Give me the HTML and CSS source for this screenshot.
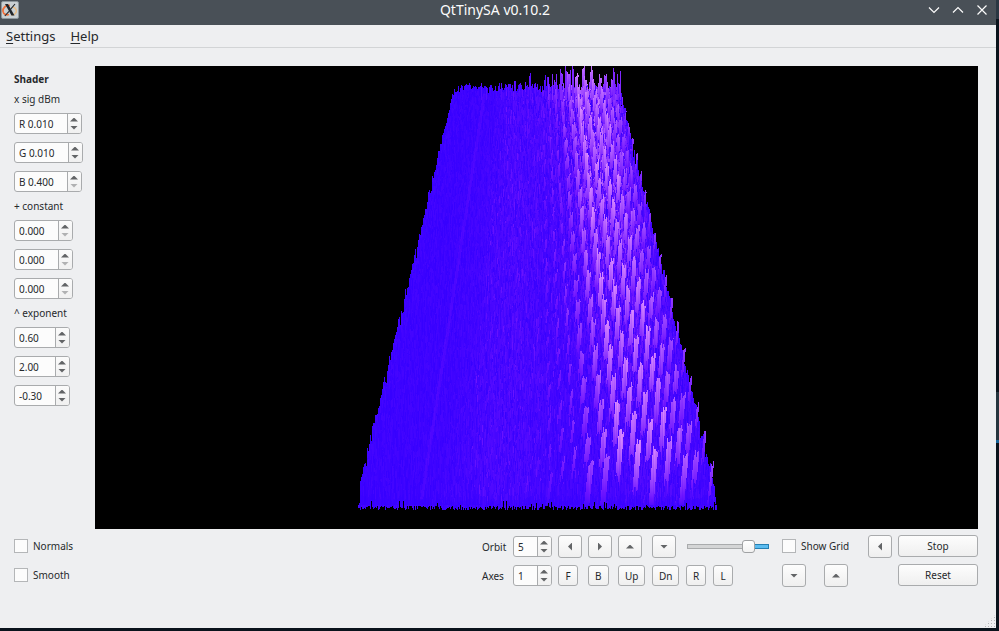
FILE: index.html
```html
<!DOCTYPE html>
<html lang="en">
<head>
<meta charset="utf-8">
<title>QtTinySA v0.10.2</title>
<link rel="stylesheet" href="styles.css">
</head>
<body>
<div class="window">
  <header class="titlebar">
    <svg class="app-icon" viewBox="0 0 18 18" aria-hidden="true">
      <rect x=".5" y=".5" width="17" height="17" rx="1.5" fill="#c9d0d3" stroke="#8d979c"/>
      <path d="M9 4.500C4.500 4 1.500 7 2 10.500c.4 2.500 3 4 6 3" fill="none" stroke="#f0703a" stroke-width="1.700"/>
      <path d="M12 6c3 1 4 3.500 3 5.500-.8 1.800-3 2.500-5 2.200" fill="none" stroke="#e9bd84" stroke-width="1.400"/>
      <path d="M4 3h3l6.500 11.500h-3z" fill="#20262b"/>
      <path d="M14 3 9.700 8.200M8 10.400 3.800 15" stroke="#20262b" stroke-width="1.100"/>
    </svg>
    <h1 class="title">QtTinySA v0.10.2</h1>
    <div class="window-buttons">
      <button type="button" aria-label="Minimize"><svg viewBox="0 0 12 12"><path d="M1 3.500 6 8.500 11 3.500"/></svg></button>
      <button type="button" aria-label="Maximize"><svg viewBox="0 0 12 12"><path d="M1 8.500 6 3.500 11 8.500"/></svg></button>
      <button type="button" aria-label="Close"><svg viewBox="0 0 12 12"><path d="M1.500 1.500 10.500 10.500M10.500 1.500 1.500 10.500"/></svg></button>
    </div>
  </header>
  <nav class="menubar">
    <a href="#settings"><u>S</u>ettings</a>
    <a href="#help"><u>H</u>elp</a>
  </nav>
  <main class="content">
    <div class="upper">
      <form class="shader">
        <h2 class="caption strong">Shader</h2>
        <p class="caption">x sig dBm</p>
        <div class="spin wide"><input type="text" value="R 0.010" aria-label="Signal red"><span class="steps"><button type="button" class="up" aria-label="Increase"></button><button type="button" class="down" aria-label="Decrease"></button></span></div>
        <div class="spin wider"><input type="text" value="G 0.010" aria-label="Signal green"><span class="steps"><button type="button" class="up" aria-label="Increase"></button><button type="button" class="down" aria-label="Decrease"></button></span></div>
        <div class="spin wide"><input type="text" value="B 0.400" aria-label="Signal blue"><span class="steps"><button type="button" class="up" aria-label="Increase"></button><button type="button" class="down" aria-label="Decrease" disabled></button></span></div>
        <p class="caption">+ constant</p>
        <div class="spin medium"><input type="text" value="0.000" aria-label="Constant red"><span class="steps"><button type="button" class="up" aria-label="Increase"></button><button type="button" class="down" aria-label="Decrease" disabled></button></span></div>
        <div class="spin medium"><input type="text" value="0.000" aria-label="Constant green"><span class="steps"><button type="button" class="up" aria-label="Increase"></button><button type="button" class="down" aria-label="Decrease" disabled></button></span></div>
        <div class="spin medium"><input type="text" value="0.000" aria-label="Constant blue"><span class="steps"><button type="button" class="up" aria-label="Increase"></button><button type="button" class="down" aria-label="Decrease" disabled></button></span></div>
        <p class="caption">^ exponent</p>
        <div class="spin narrow"><input type="text" value="0.60" aria-label="Exponent red"><span class="steps"><button type="button" class="up" aria-label="Increase"></button><button type="button" class="down" aria-label="Decrease"></button></span></div>
        <div class="spin narrow"><input type="text" value="2.00" aria-label="Exponent green"><span class="steps"><button type="button" class="up" aria-label="Increase"></button><button type="button" class="down" aria-label="Decrease"></button></span></div>
        <div class="spin narrow"><input type="text" value="-0.30" aria-label="Exponent blue"><span class="steps"><button type="button" class="up" aria-label="Increase"></button><button type="button" class="down" aria-label="Decrease"></button></span></div>
      </form>
      <div class="view"><canvas id="surface" width="883" height="463"></canvas></div>
    </div>
    <div class="controls">
      <label class="check"><input type="checkbox">Normals</label>
      <label for="orbit">Orbit</label>
      <div class="spin small"><input type="text" id="orbit" value="5"><span class="steps"><button type="button" class="up" aria-label="Increase"></button><button type="button" class="down" aria-label="Decrease"></button></span></div>
      <button type="button" class="btn arrow left" aria-label="Orbit left"></button>
      <button type="button" class="btn arrow right" aria-label="Orbit right"></button>
      <button type="button" class="btn arrow up" aria-label="Orbit up"></button>
      <button type="button" class="btn arrow down" aria-label="Orbit down"></button>
      <input class="slider" type="range" min="0" max="100" value="80" aria-label="Zoom">
      <label class="check"><input type="checkbox">Show Grid</label>
      <button type="button" class="btn arrow left" aria-label="Grid left"></button>
      <button type="button" class="btn action">Stop</button>

      <label class="check"><input type="checkbox">Smooth</label>
      <label for="axes">Axes</label>
      <div class="spin small"><input type="text" id="axes" value="1"><span class="steps"><button type="button" class="up" aria-label="Increase"></button><button type="button" class="down" aria-label="Decrease"></button></span></div>
      <button type="button" class="btn">F</button>
      <button type="button" class="btn">B</button>
      <button type="button" class="btn">Up</button>
      <button type="button" class="btn">Dn</button>
      <div class="pair"><button type="button" class="btn">R</button><button type="button" class="btn">L</button></div>
      <div class="pair grid-move"><button type="button" class="btn arrow down" aria-label="Grid down"></button><button type="button" class="btn arrow up" aria-label="Grid up"></button></div>
      <button type="button" class="btn action reset">Reset</button>
    </div>
  </main>
  <div class="grip"></div>
</div>
<script src="surface.js"></script>
</body>
</html>
```
FILE: styles.css
```css
* { box-sizing: border-box; }

body {
  margin: 0;
  min-height: 100vh;
  display: flex;
  padding: 0 3px 3px 0;
  background: linear-gradient(#2b3742 19px, #0a131c 19px, #0a131c 392px, #25343e 392px, #25343e 440px, #17649a 440px, #17649a 443px, #0a131c 443px);
  color: #26292c;
  font: 10px/12px "Noto Sans", sans-serif;
}

button, input { font: inherit; color: inherit; margin: 0; }

.window {
  position: relative;
  flex: 1;
  min-width: 0;
  background: #eeeff1;
}

.titlebar {
  display: grid;
  grid-template-columns: 62px 1fr 68px;
  align-items: center;
  height: 25px;
  padding-bottom: 5px;
  background: #495057;
  color: #fcfcfc;
}

.app-icon { width: 18px; height: 18px; margin-left: 1px; }

.title {
  margin: 0;
  text-align: center;
  font-size: 14px;
  line-height: 20px;
  font-weight: 400;
}

.window-buttons { display: flex; gap: 12px; }
.window-buttons button {
  width: 12px;
  height: 12px;
  padding: 0;
  border: 0;
  background: none;
}
.window-buttons svg {
  display: block;
  fill: none;
  stroke: #fcfcfc;
  stroke-width: 1.2;
}

.menubar {
  display: flex;
  gap: 15px;
  height: 23px;
  padding-left: 6px;
  border-bottom: 1px solid #d2d4d6;
  font-size: 13px;
  line-height: 23px;
}
.menubar a { color: inherit; text-decoration: none; }
.menubar u { text-underline-offset: 2px; }

.content { padding: 18px 18px 38px 14px; }
.upper { display: flex; }

.shader {
  flex: 0 0 81px;
  display: flex;
  flex-direction: column;
  align-items: flex-start;
  gap: 8px;
  padding-top: 7px;
}
.caption { margin: 0; font-size: inherit; font-weight: 400; white-space: nowrap; }
.strong { font-weight: 700; }

.view { flex: 1; min-width: 0; background: #000; }
.view canvas { display: block; width: 100%; height: auto; }

.spin {
  display: flex;
  height: 21px;
  border: 1px solid #a9abad;
  border-radius: 3px;
  background: #fcfcfc;
  overflow: hidden;
}
.spin input {
  flex: 1;
  min-width: 0;
  padding: 0 0 0 4px;
  border: 0;
  background: none;
  outline: 0;
}
.wider { width: 69px; }
.wide { width: 68px; }
.medium { width: 59px; }
.narrow { width: 56px; }
.small { width: 39px; }

.steps {
  flex: 0 0 14px;
  display: grid;
  grid-template-rows: 1fr 1fr;
  border-left: 1px solid #a9abad;
  background: linear-gradient(#fbfbfb, #f0f0f0);
}
.steps button {
  display: flex;
  justify-content: center;
  padding: 0 1px 0 0;
  border: 0;
  background: none;
  color: #626466;
}
.steps button:disabled { color: #b0b1b2; }
.steps .up { align-items: flex-end; padding-bottom: 2px; }
.steps .down { align-items: flex-start; padding-top: 2px; }
.steps button::before {
  content: "";
  width: 8px;
  height: 4px;
  background: currentColor;
}
.up::before { clip-path: polygon(50% 0, 100% 100%, 0 100%); }
.down::before { clip-path: polygon(0 0, 100% 0, 50% 100%); }
.left::before { clip-path: polygon(100% 0, 100% 100%, 0 50%); }
.right::before { clip-path: polygon(0 0, 100% 50%, 0 100%); }

.controls {
  display: grid;
  grid-template-columns: 1fr 31px 45px 30px 30px 34px 34px 96px 86px 30px 80px;
  grid-auto-rows: 29px;
  align-items: center;
  justify-items: start;
  margin-top: 3px;
}

.check {
  display: flex;
  align-items: center;
  gap: 5px;
  padding-bottom: 1px;
  white-space: nowrap;
}
.check input {
  appearance: none;
  width: 14px;
  height: 14px;
  border: 1px solid #b4b6b8;
  background: #fcfcfc;
}

.btn {
  display: flex;
  align-items: center;
  justify-content: center;
  height: 21px;
  padding: 0 6px;
  min-width: 20px;
  border: 1px solid #a9abad;
  border-radius: 3px;
  background: linear-gradient(#fdfdfd, #efefef);
}
.arrow { width: 24px; height: 23px; padding: 0; color: #626466; }
.arrow::before { content: ""; width: 8px; height: 4px; background: currentColor; }
.arrow.left::before, .arrow.right::before { width: 4px; height: 8px; }
.action { width: 80px; height: 22px; margin-bottom: 1px; }
.reset { grid-column: 11; }
.pair { display: flex; gap: 7px; }
.grid-move { gap: 18px; }

.slider {
  appearance: none;
  width: 82px;
  height: 13px;
  margin-left: 1px;
  background: none;
}
.slider::-webkit-slider-runnable-track {
  height: 5px;
  border: 1px solid;
  border-image: linear-gradient(90deg, #a9abad 75%, #2580b3 75%) 1;
  background: linear-gradient(90deg, #d4d5d6 75%, #5bbcf0 75%);
}
.slider::-webkit-slider-thumb {
  appearance: none;
  width: 13px;
  height: 13px;
  margin-top: -5px;
  border: 1px solid #a0a2a4;
  border-radius: 3px;
  background: linear-gradient(#fff, #f2f2f2);
}

.grip {
  position: absolute;
  right: 1px;
  bottom: 1px;
  width: 12px;
  height: 12px;
  background: conic-gradient(#b9bbbd 25%, transparent 0) 0 0 / 3px 3px;
  background: linear-gradient(#eeeff1 2px, transparent 2px) 0 0 / 3px 3px, linear-gradient(90deg, #eeeff1 2px, #b4b6b8 2px) 0 0 / 3px 3px;
  clip-path: polygon(100% 0, 100% 100%, 0 100%);
}
```
FILE: surface.js
```js
// Draws the waterfall surface back to front, so nearer sweeps hide farther ones.
const canvas = document.getElementById("surface");
const ctx = canvas.getContext("2d");
const BACK = 28, FRONT = 441;
let seed = 20240;

function random() {
  seed ^= seed << 13;
  seed ^= seed >>> 17;
  seed ^= seed << 5;
  return (seed >>> 0) / 4294967296;
}

function depth(y) { return (y - BACK) / (FRONT - BACK); }

function project(u, y) {
  const left = 360 - 97 * depth(y);
  const right = 524 + 97 * depth(y);
  return left + (right - left) * u;
}

function colour(level) {
  const t = Math.max(0, Math.min(1, level));
  const r = Math.round(54 + 162 * t);
  const g = Math.round(t < 0.35 ? t * 60 : 21 + (t - 0.35) * 175);
  return `rgb(${r},${g},255)`;
}

// Position across the sweep, strength, vertical phase.
const carriers = [
  [0.33, 0.14, 0.2], [0.37, 0.18, 0.7], [0.41, 0.18, 0.4], [0.46, 0.16, 0.9],
  [0.50, 0.24, 0.1], [0.535, 0.36, 0.5], [0.57, 0.44, 0.95], [0.605, 0.52, 0.6],
  [0.645, 0.62, 0.25], [0.69, 0.8, 0.1], [0.735, 1, 0.15], [0.78, 1, 0.45],
  [0.825, 0.98, 0.65], [0.87, 0.96, 0.35], [0.91, 0.8, 0.05], [0.945, 0.68, 0.75],
  [0.985, 0.6, 0.2]
];

const shapes = [];

for (let y = BACK; y < FRONT; y += 1) {
  const d = depth(y);
  for (let n = 0; n < 80 + 70 * d; n++) {
    const u = random();
    const band = Math.exp(-Math.pow((u - 0.4) / 0.14, 2)) * 0.12
               + Math.exp(-Math.pow((u - 0.82) / 0.18, 2)) * (0.62 * Math.pow(1 - d, 1.4) + 0.12);
    shapes.push({ base: y + random(), u, h: 5 + random() * (7 + 10 * d), level: random() * 0.09 + band * random() * 1.3, width: 0 });
  }
  for (let n = 0; n < 2; n++) {
    shapes.push({ base: y, u: 0.3 + random() * 0.35, h: 10 + random() * 10, level: 0.12 + random() * 0.2, width: 0 });
  }
}

for (const [u, strength, phase] of carriers) {
  let tip = -34 + phase * 14;
  while (tip < FRONT) {
    const d = Math.max(0, depth(tip));
    const h = (34 + 34 * d) * (0.3 + 0.7 * strength);
    if (tip + h > BACK + 2 && tip + h < FRONT + 10) {
      shapes.push({ base: Math.min(tip + h, FRONT), u, h, level: strength * (0.92 + random() * 0.14), width: strength > 0.6 ? 3 + 2.5 * d : 1.6 + d });
    }
    tip += 12 + 21 * Math.pow(d, 0.7);
  }
}

shapes.sort((a, b) => a.base - b.base);

ctx.fillStyle = "#000";
ctx.fillRect(0, 0, canvas.width, canvas.height);

// Solid floor under the traces.
for (let y = BACK; y < FRONT; y++) {
  const x = Math.ceil(project(0, y));
  ctx.fillStyle = colour(0.02);
  ctx.fillRect(x, y, Math.floor(project(1, y)) - x, 1);
}

for (const s of shapes) {
  const x = project(s.u, s.base);
  if (!s.width) {
    const top = Math.round(s.base - s.h);
    const height = Math.round(s.h);
    ctx.fillStyle = colour(s.level);
    ctx.fillRect(Math.floor(x), top, 1, height);
    ctx.fillStyle = colour(s.level * 0.5);
    ctx.fillRect(Math.floor(x), top + (height >> 1), 1, height - (height >> 1));
    continue;
  }
  const lean = 1 + 4 * depth(s.base);
  const columns = Math.ceil(s.width + lean);
  for (let c = 0; c < columns; c++) {
    const start = Math.round(random() * 7);
    const shade = 0.88 + random() * 0.18;
    for (let k = start; k < s.h; k++) {
      const p = k / s.h;
      const edge = x + lean * (0.5 - p) - s.width / 2;
      const px = Math.floor(x - columns / 2) + c;
      if (px < edge - 0.5 || px > edge + s.width - 0.5) continue;
      ctx.fillStyle = colour(s.level * shade * Math.pow(1 - p, 0.55));
      ctx.fillRect(px, Math.round(s.base - s.h + k), 1, 1);
    }
  }
}

// Faint continuous ridge on the left part of the sweep.
for (let y = BACK; y < FRONT - 8; y++) {
  ctx.fillStyle = "rgba(105,15,255,0.3)";
  ctx.fillRect(Math.round(project(0.17, y)), y, 3, 1);
}

// Narrow spikes rising behind the far edge.
for (const [x, top] of [[386, 17], [391, 21], [406, 17], [413, 19], [420, 15], [435, 7], [440, 17], [453, 11], [457, 8], [461, 8], [465, 3], [466, 10], [470, 0], [471, 5], [475, 4], [477, 0], [478, 3], [519, 6], [518, 2], [522, 8], [525, 5]]) {
  ctx.fillStyle = colour(x > 450 ? 0.45 : 0.2);
  ctx.fillRect(x, top, 1, BACK - top + 6);
}

// Ragged near edge.
for (let x = 262; x < 622; x++) {
  const bottom = FRONT + 3 - Math.floor(random() * 5) - (random() > 0.94 ? 5 : 0);
  ctx.fillStyle = colour(random() * 0.12);
  ctx.fillRect(x, FRONT - 2, 1, 6);
  ctx.fillStyle = "#000";
  ctx.fillRect(x, bottom, 1, 20);
}
```
